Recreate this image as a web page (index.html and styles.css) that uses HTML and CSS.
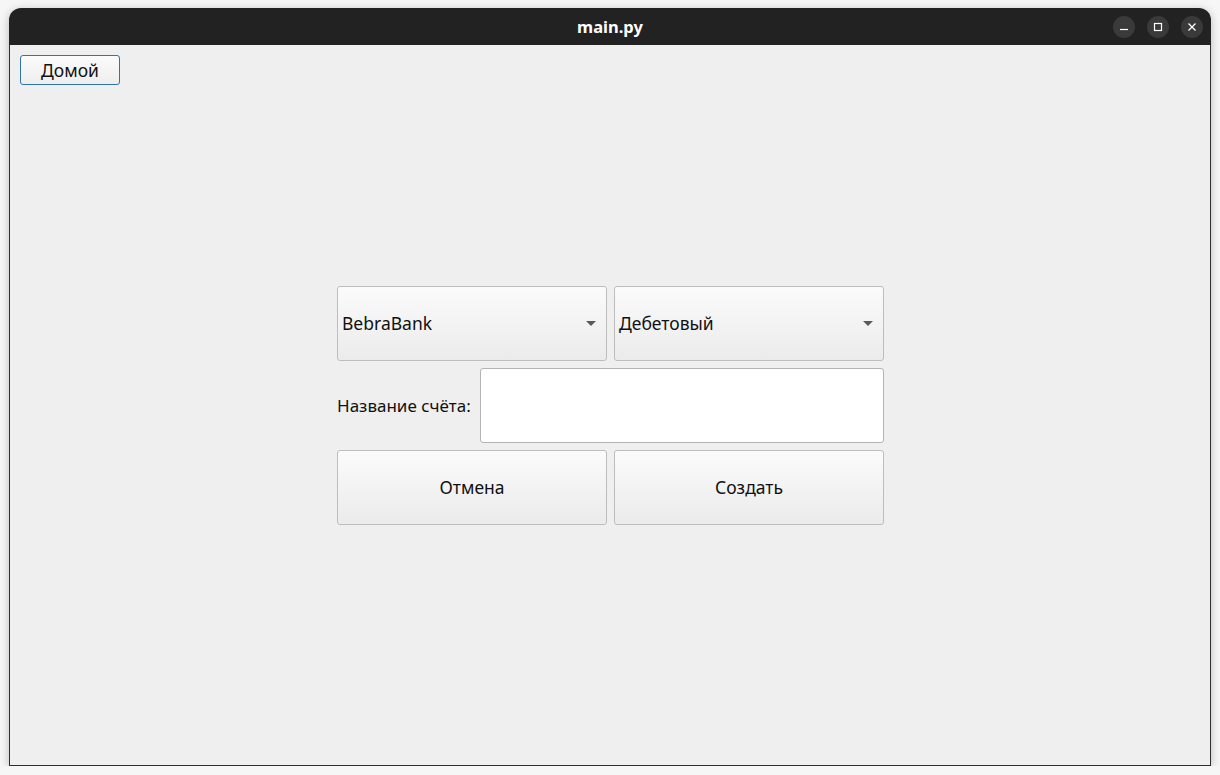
FILE: index.html
```html
<!DOCTYPE html>
<html lang="ru">
<head>
<meta charset="utf-8">
<title>main.py</title>
<link rel="stylesheet" href="styles.css">
</head>
<body>
<div class="window">
  <div class="titlebar">
    <span class="title">main.py</span>
    <div class="controls">
      <span class="ctl"><svg width="22" height="22" viewBox="0 0 22 22"><path d="M7 13.5h8" stroke="#fff" stroke-width="1.2"/></svg></span>
      <span class="ctl"><svg width="22" height="22" viewBox="0 0 22 22"><rect x="7.5" y="7.5" width="7" height="7" fill="none" stroke="#fff" stroke-width="1.2"/></svg></span>
      <span class="ctl"><svg width="22" height="22" viewBox="0 0 22 22"><path d="M7.5 7.5l7 7M14.5 7.5l-7 7" stroke="#fff" stroke-width="1.3"/></svg></span>
    </div>
  </div>
  <div class="content">
    <button class="home">Домой</button>
    <div class="form">
      <div class="row two">
        <div class="combo"><span>BebraBank</span><span class="arrow"></span></div>
        <div class="combo"><span>Дебетовый</span><span class="arrow"></span></div>
      </div>
      <div class="row field">
        <label class="label">Название счёта:</label>
        <div class="input"></div>
      </div>
      <div class="row two">
        <button class="btn">Отмена</button>
        <button class="btn">Создать</button>
      </div>
    </div>
  </div>
</div>
</body>
</html>
```
FILE: styles.css
```css
html, body {
  margin: 0;
  padding: 0;
  background: #f6f6f6;
  font-family: "Noto Sans", "Open Sans", sans-serif;
}
.window {
  margin: 8px 0 0 9px;
  width: 1202px;
  height: 758px;
  display: flex;
  flex-direction: column;
  box-shadow: 0 2px 10px rgba(0,0,0,0.25);
  border-radius: 12px 12px 0 0;
}
.titlebar {
  height: 37px;
  background: #222222;
  border-radius: 12px 12px 0 0;
  display: grid;
  grid-template-columns: 1fr;
  align-items: center;
  justify-items: center;
}
.title {
  grid-area: 1 / 1;
  color: #ffffff;
  font-weight: bold;
  font-size: 16.5px;
}
.controls {
  grid-area: 1 / 1;
  justify-self: end;
  display: flex;
  gap: 12px;
  margin-right: 8px;
}
.ctl {
  width: 22px;
  height: 22px;
  border-radius: 50%;
  background: #3a3a3a;
  display: block;
}
.ctl svg { display: block; }
.content {
  flex: 1;
  background: #efefef;
  border: 1px solid #2e2e2e;
  border-top: none;
  display: grid;
  grid-template-columns: 1fr;
  grid-template-rows: 1fr;
}
.home {
  grid-area: 1 / 1;
  align-self: start;
  justify-self: start;
  margin: 10px 0 0 10px;
  width: 100px;
  height: 30px;
  border: 1px solid #2f74ad;
  border-radius: 3px;
  background: linear-gradient(#fbfbfb, #eeeeee);
  font-family: inherit;
  font-size: 17.5px;
  color: #111;
  padding: 0;
}
.form {
  grid-area: 1 / 1;
  align-self: center;
  justify-self: center;
  width: 547px;
  display: flex;
  flex-direction: column;
  gap: 7px;
  margin-left: 1px;
}
.row {
  display: flex;
  gap: 7px;
  height: 75px;
}
.combo, .btn {
  flex: 1;
  box-sizing: border-box;
  border: 1px solid #bdbdbd;
  border-radius: 3px;
  background: linear-gradient(#fbfbfb, #ebebeb);
  font-family: inherit;
  font-size: 17.5px;
  color: #111;
}
.combo {
  display: flex;
  align-items: center;
  justify-content: space-between;
  padding: 0 10px 0 4px;
}
.arrow {
  width: 0;
  height: 0;
  border-left: 5px solid transparent;
  border-right: 5px solid transparent;
  border-top: 5px solid #5a5a5a;
}
.btn { padding: 0; }
.field { align-items: center; }
.label {
  flex: 0 0 136px;
  font-size: 17px;
  color: #111;
  white-space: nowrap;
}
.input {
  flex: 1;
  height: 75px;
  box-sizing: border-box;
  background: #ffffff;
  border: 1px solid #b3b3b3;
  border-radius: 3px;
}
```
